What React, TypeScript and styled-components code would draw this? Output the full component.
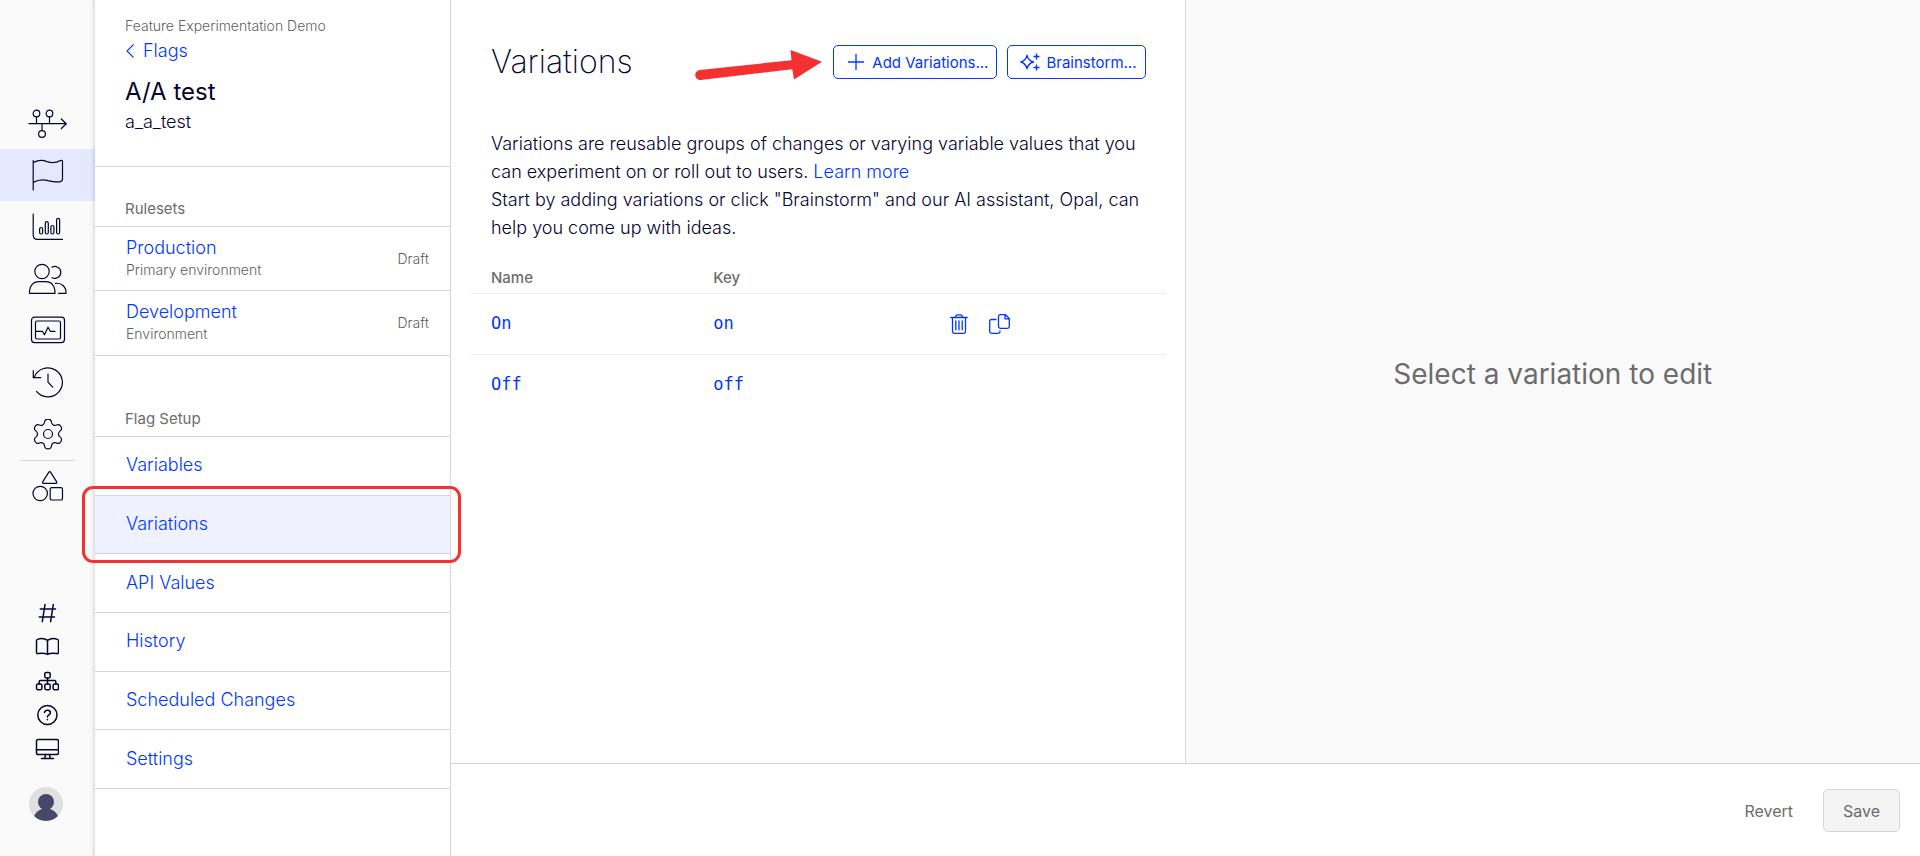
import React from 'react';
import styled, { createGlobalStyle } from 'styled-components';
import { Settings } from 'lucide-react';

const color = {
  ink: '#04042e',
  blue: '#0037ff',
  grey: '#6c6c6c',
  note: '#5f5f5f',
  line: '#d6d6d6',
  faint: '#ededed',
  pale: '#fafafa',
  red: '#f43030',
};

const GlobalStyle = createGlobalStyle`
  *, *::before, *::after { box-sizing: border-box; }
  body {
    margin: 0;
    background: #fff;
    color: ${color.ink};
    font-family: Inter, "Liberation Sans", sans-serif;
    font-size: 18px;
    font-weight: 300;
  }
  a { color: ${color.blue}; text-decoration: none; }
  button { font-family: inherit; cursor: pointer; }
  svg { display: block; }
`;

const Shell = styled.div`
  display: flex;
  min-height: 100vh;
`;

const Rail = styled.nav`
  display: flex;
  flex-direction: column;
  flex: 0 0 95px;
  padding: 97px 0 35px;
  background: ${color.pale};
  box-shadow: inset -4px 0 4px -3px rgba(0, 0, 0, 0.16);
`;

const RailLink = styled.a<{ $active?: boolean }>`
  display: flex;
  align-items: center;
  justify-content: center;
  height: 52px;
  padding-right: 2px;
  background: ${(p) => (p.$active ? '#e5e9ff' : 'transparent')};
  box-shadow: ${(p) => (p.$active ? 'inset -4px 0 4px -3px rgba(0, 0, 0, 0.16)' : 'none')};
`;

const RailDivider = styled.hr`
  width: 55px;
  height: 1px;
  margin: -1px 0 -1px 20px;
  border: 0;
  background: ${color.line};
`;

const RailTools = styled.div`
  display: flex;
  flex-direction: column;
  margin-top: auto;
`;

const ToolLink = styled.a`
  display: flex;
  align-items: center;
  justify-content: center;
  height: 34px;
  padding-right: 2px;
`;

const Avatar = styled.button`
  width: 34px;
  height: 34px;
  margin: 21px 0 0 29px;
  padding: 0;
  border: 0;
  border-radius: 50%;
  background: #e0e0e0;
  overflow: hidden;
`;

const Side = styled.aside`
  flex: 0 0 356px;
  border-right: 1px solid ${color.line};
`;

const SideHeader = styled.header`
  padding: 16px 30px 31px;
  border-bottom: 1px solid ${color.line};
`;

const BackLink = styled.a`
  display: flex;
  align-items: center;
  gap: 8px;
  height: 30px;
  line-height: 24px;
`;

const FlagName = styled.h1`
  margin: 10px 0 0;
  font-size: 24px;
  line-height: 32px;
  font-weight: 400;
`;

const FlagKey = styled.div`
  line-height: 27px;
`;

const SectionLabel = styled.h2<{ $spacious?: boolean }>`
  margin: 0;
  padding: ${(p) => (p.$spacious ? 53 : 32)}px 30px 7px;
  border-bottom: 1px solid ${color.line};
  font-size: 15px;
  line-height: 20px;
  font-weight: 400;
  color: ${color.grey};
`;

const Ruleset = styled.a`
  display: flex;
  align-items: center;
  justify-content: space-between;
  height: 64px;
  padding: 0 21px 0 31px;
  border-bottom: 1px solid ${color.line};
  & + & { height: 65px; }
`;

const RulesetText = styled.div`
  padding-bottom: 2px;
  line-height: 24px;
`;

const Note = styled.div`
  font-size: 14px;
  line-height: 20px;
  color: ${color.note};
`;

const SetupList = styled.ul`
  display: grid;
  grid-auto-rows: 1fr;
  min-height: 352px;
  margin: 0;
  padding: 0;
  list-style: none;
`;

const SetupItem = styled.li<{ $active?: boolean }>`
  position: relative;
  display: flex;
  border-bottom: 1px solid ${color.line};
  background: ${(p) => (p.$active ? '#eff1ff' : 'transparent')};
  a {
    flex: 1;
    display: flex;
    align-items: center;
    padding: 0 0 2px 31px;
  }
`;

const Highlight = styled.span`
  position: absolute;
  inset: -10px -11px -10px -13px;
  z-index: 1;
  border: 3px solid ${color.red};
  border-radius: 11px;
  pointer-events: none;
`;

const Work = styled.div`
  flex: 1;
  display: flex;
  flex-direction: column;
  min-width: 0;
`;

const Panes = styled.div`
  flex: 1;
  display: grid;
  grid-template-columns: 1fr 1fr;
`;

const Main = styled.main`
  border-right: 1px solid ${color.line};
`;

const MainHeader = styled.header`
  display: flex;
  align-items: center;
  gap: 10px;
  padding: 40px 39px 0 40px;
`;

const Title = styled.h2`
  margin: 0 auto 0 0;
  font-size: 32px;
  line-height: 44px;
  font-weight: 200;
`;

const OutlineButton = styled.button`
  display: flex;
  align-items: center;
  gap: 6px;
  height: 34px;
  padding: 0 8px 0 12px;
  border: 1px solid ${color.blue};
  border-radius: 5px;
  background: #fff;
  color: ${color.blue};
  font-size: 15px;
  white-space: nowrap;
`;

const Intro = styled.p`
  margin: 46px 39px 0 40px;
  line-height: 28px;
`;

const Table = styled.table`
  width: calc(100% - 39px);
  margin: 20px 19px 0 20px;
  border-collapse: collapse;
  table-layout: fixed;
  th {
    height: 31px;
    padding: 0 0 0 20px;
    text-align: left;
    font-size: 15px;
    font-weight: 500;
    color: ${color.grey};
  }
  td {
    height: 61px;
    padding: 0 0 2px 20px;
    font-family: "DejaVu Sans Mono", monospace;
    font-size: 17px;
  }
  tbody tr { border-top: 1px solid ${color.faint}; }
`;

const Col = styled.col<{ $width: string }>`
  width: ${(p) => p.$width};
`;

const Actions = styled.div`
  display: flex;
  gap: 21px;
  padding: 2px 0 0 1px;
`;

const IconButton = styled.button`
  padding: 0;
  border: 0;
  background: none;
  color: ${color.blue};
`;

const Editor = styled.section`
  display: flex;
  align-items: center;
  justify-content: center;
  padding-bottom: 16px;
  background: ${color.pale};
  color: ${color.grey};
  font-size: 28px;
  font-weight: 400;
`;

const Footer = styled.footer`
  display: flex;
  align-items: center;
  justify-content: flex-end;
  gap: 10px;
  height: 93px;
  padding-right: 20px;
  border-top: 1px solid ${color.line};
`;

const FooterButton = styled.button<{ $filled?: boolean }>`
  height: 43px;
  padding: 2px 19px 0;
  border: 1px solid ${(p) => (p.$filled ? color.line : 'transparent')};
  border-radius: 5px;
  background: ${(p) => (p.$filled ? '#f4f4f4' : 'transparent')};
  color: ${color.grey};
  font-size: 16px;
`;

const RailIcon = ({ children }: { children: React.ReactNode }) => (
  <svg width="40" height="32" viewBox="0 0 40 32" fill="none" stroke={color.ink} strokeWidth="1.2" strokeLinecap="round" strokeLinejoin="round" aria-hidden="true">
    {children}
  </svg>
);

const ToolIcon = ({ children }: { children: React.ReactNode }) => (
  <svg width="24" height="24" viewBox="0 0 24 24" fill="none" stroke={color.ink} strokeWidth="1.5" strokeLinecap="round" strokeLinejoin="round" aria-hidden="true">
    {children}
  </svg>
);

const railItems = [
  {
    label: 'Overview',
    icon: (
      <RailIcon>
        <circle cx="9.5" cy="6.5" r="3.3" />
        <circle cx="22.5" cy="6.5" r="3.3" />
        <circle cx="15" cy="27" r="3.4" />
        <path d="M2 16.7H39M9.5 10V16.7M22.5 10V16.7M15 16.7V23.5M34.3 12L39.3 16.7L34.3 21.5" />
      </RailIcon>
    ),
  },
  {
    label: 'Flags',
    active: true,
    icon: (
      <RailIcon>
        <path d="M6.2 1.5V31M6.2 3.6C10 1.6 16 1 20 2.6C25 4.4 30 3.6 33.5 1.6C34.8 1 35.5 1.4 35.5 2.6V20C35.5 22 34.5 22.6 32.5 22.8C28 23.3 25 22.6 21 21.6C16 20.2 11 20.8 6.2 23.4" />
      </RailIcon>
    ),
  },
  {
    label: 'Reports',
    icon: (
      <RailIcon>
        <path d="M6.2 3V24C6.2 27 7.5 28.4 10.5 28.4H35.5" />
        <rect x="12.6" y="16.5" width="3" height="6.5" rx="1.5" />
        <rect x="18.3" y="10.7" width="3" height="12.3" rx="1.5" />
        <rect x="23.9" y="14.5" width="3" height="8.5" rx="1.5" />
        <rect x="29.6" y="7.3" width="3" height="15.7" rx="1.5" />
      </RailIcon>
    ),
  },
  {
    label: 'Audiences',
    icon: (
      <RailIcon>
        <circle cx="15" cy="8.5" r="7.2" />
        <path d="M25 4.3C28.5 2.2 33.8 4.5 33.8 9.3C33.8 14.2 28.7 16.7 25 14.7" />
        <path d="M2.5 30.3C2.2 23 6 18.7 12 18.7H18.5C24.5 18.7 28.3 23 28 30.3Z" />
        <path d="M28.5 20.3C35 19.7 39.3 24 39 30.3H31.5" />
      </RailIcon>
    ),
  },
  {
    label: 'Monitoring',
    icon: (
      <RailIcon>
        <rect x="4.5" y="2.2" width="33" height="25.4" rx="3" />
        <rect x="8.5" y="6" width="25" height="18" rx="1.5" />
        <path d="M8.5 16.3H15.3L17.5 19.8L21 12.2L23.3 16.3H28" />
      </RailIcon>
    ),
  },
  {
    label: 'History',
    icon: (
      <RailIcon>
        <path d="M7.2 10.5A14.5 14.5 0 1 1 9.5 24.4M6.3 3.5V10.7H13.7M21 7.2V15.2L25.7 20.2" />
      </RailIcon>
    ),
  },
  {
    label: 'Settings',
    icon: (
      <RailIcon>
        <Settings x={3} y={-3} size={36} strokeWidth={0.8} color={color.ink} />
      </RailIcon>
    ),
  },
];

const toolItems = [
  {
    label: 'Channels',
    icon: <ToolIcon><path d="M5.3 8H20.5M4.3 16H19.5M10 3.5L7.3 20.7M18.3 3.5L15.6 20.7" /></ToolIcon>,
  },
  {
    label: 'Documentation',
    icon: <ToolIcon><path d="M12.5 5.3C9.5 3.5 5 3.5 2.6 4.4C1.8 4.7 1.5 5.2 1.5 6V17.3C1.5 18.3 2.2 18.8 3.2 18.6C6.5 17.9 9.5 18 12.5 19.3C15.5 18 18.5 17.9 21.8 18.6C22.8 18.8 23.5 18.3 23.5 17.3V6C23.5 5.2 23.2 4.7 22.4 4.4C20 3.5 15.5 3.5 12.5 5.3ZM12.5 5.3V19.5" /></ToolIcon>,
  },
  {
    label: 'Structure',
    icon: (
      <ToolIcon>
        <rect x="9.8" y="3.6" width="5.4" height="5.4" rx="1.4" />
        <rect x="1.5" y="15.1" width="5.4" height="5.6" rx="1.4" />
        <rect x="9.8" y="15.1" width="5.4" height="5.6" rx="1.4" />
        <rect x="18.1" y="15.1" width="5.4" height="5.6" rx="1.4" />
        <path d="M12.5 9V15M4.2 15V12.4Q4.2 11.5 5.2 11.5H19.8Q20.8 11.5 20.8 12.4V15" />
      </ToolIcon>
    ),
  },
  {
    label: 'Help',
    icon: (
      <ToolIcon>
        <circle cx="12.4" cy="12" r="9.6" />
        <path d="M9.5 9.6C9.5 6.4 15.4 6.5 15.4 9.7C15.4 11.9 12.4 11.9 12.4 13.9M12.4 16.6V16.7" />
      </ToolIcon>
    ),
  },
  {
    label: 'Display',
    icon: (
      <ToolIcon>
        <rect x="1.5" y="2.5" width="22" height="15" rx="1.8" />
        <path d="M1.5 12.8H23.5M10.5 17.5L9.8 21.3M14.5 17.5L15.2 21.3M6.5 21.4H18.5" />
      </ToolIcon>
    ),
  },
];

const rulesets = [
  { name: 'Production', note: 'Primary environment', status: 'Draft' },
  { name: 'Development', note: 'Environment', status: 'Draft' },
];

const setupPages = ['Variables', 'Variations', 'API Values', 'History', 'Scheduled Changes', 'Settings'];

const variations = [
  { name: 'On', key: 'on', editable: true },
  { name: 'Off', key: 'off', editable: false },
];

const Arrow = () => (
  <svg width="128" height="40" viewBox="0 -7 128 40" fill={color.red} aria-hidden="true">
    <path d="M5 21L96.5 11.2L95.5 1L127 12.7L99 30.5L97.3 20.3L5.5 31A5 5 0 0 1 5 21Z" />
  </svg>
);

const PlusIcon = () => (
  <svg width="20" height="18" viewBox="-1 0 20 18" fill="none" stroke="currentColor" strokeWidth="1.3" aria-hidden="true">
    <path d="M9 1V17M1 9H17" />
  </svg>
);

const SparkleIcon = () => (
  <svg width="20" height="18" viewBox="0 0 20 18" fill="none" stroke="currentColor" strokeWidth="1.4" strokeLinejoin="round" aria-hidden="true">
    <path d="M7 2.3C8 6.3 9.5 8 13.5 9C9.5 10 8 11.7 7 15.7C6 11.7 4.5 10 0.8 9C4.5 8 6 6.3 7 2.3Z" />
    <path d="M16.5 0.5V6.5M13.5 3.5H19.5M16.5 11.5V17.5M13.5 14.5H19.5" />
  </svg>
);

const TrashIcon = () => (
  <svg width="18" height="20" viewBox="0 0 18 20" fill="none" stroke="currentColor" strokeWidth="1.3" strokeLinecap="round" strokeLinejoin="round" aria-hidden="true">
    <path d="M0.8 3.5H17.2M2.5 3.5V17.5Q2.5 19.3 4.3 19.3H13.7Q15.5 19.3 15.5 17.5V3.5M5.5 3.3Q5.8 0.8 7.3 0.8H10.7Q12.2 0.8 12.5 3.3M5.8 6.8V15.8M9 6.8V15.8M12.2 6.8V15.8" />
  </svg>
);

const CopyIcon = () => (
  <svg width="21" height="20" viewBox="0 0 21 20" fill="none" stroke="currentColor" strokeWidth="1.3" strokeLinecap="round" strokeLinejoin="round" aria-hidden="true">
    <path d="M11.3 0.7H16.5L20.3 4.5V12.5Q20.3 14.3 18.5 14.3H11.3Q9.5 14.3 9.5 12.5V2.5Q9.5 0.7 11.3 0.7ZM16 1V4.8H20M7 5.5H2.5Q0.7 5.5 0.7 7.3V17.5Q0.7 19.3 2.5 19.3H9.2Q11 19.3 11 17.5V16.8" />
  </svg>
);

export default function App() {
  return (
    <>
      <GlobalStyle />
      <Shell>
        <Rail aria-label="Product">
          {railItems.map((item) => (
            <RailLink key={item.label} href="#" aria-label={item.label} $active={item.active}>
              {item.icon}
            </RailLink>
          ))}
          <RailDivider />
          <RailLink href="#" aria-label="Components">
            <RailIcon>
              <path d="M21.7 2.4Q22.7 0.9 23.7 2.4L29.7 11.9Q30.3 13.3 28.9 13.3H16.5Q15.1 13.3 15.7 11.9Z" />
              <circle cx="13.2" cy="23.5" r="7.2" />
              <rect x="23.2" y="17.7" width="12.3" height="12.3" rx="1.6" />
            </RailIcon>
          </RailLink>
          <RailTools>
            {toolItems.map((item) => (
              <ToolLink key={item.label} href="#" aria-label={item.label}>
                {item.icon}
              </ToolLink>
            ))}
            <Avatar type="button" aria-label="Account">
              <svg width="34" height="34" viewBox="0 0 34 34" fill="#464769" aria-hidden="true">
                <circle cx="17" cy="15" r="8" />
                <path d="M5 29.5C7 24 12 21.5 17 21.5S27 24 29 29.5C24 35.5 10 35.5 5 29.5Z" />
              </svg>
            </Avatar>
          </RailTools>
        </Rail>

        <Side>
          <SideHeader>
            <Note>Feature Experimentation Demo</Note>
            <BackLink href="#">
              <svg width="10" height="14" viewBox="0 0 10 14" fill="none" stroke="currentColor" strokeWidth="1.1" aria-hidden="true">
                <path d="M8.5 0.5L2 7L8.5 13.5" />
              </svg>
              Flags
            </BackLink>
            <FlagName>A/A test</FlagName>
            <FlagKey>a_a_test</FlagKey>
          </SideHeader>

          <SectionLabel>Rulesets</SectionLabel>
          {rulesets.map((r) => (
            <Ruleset key={r.name} href="#">
              <RulesetText>
                {r.name}
                <Note>{r.note}</Note>
              </RulesetText>
              <Note>{r.status}</Note>
            </Ruleset>
          ))}

          <SectionLabel $spacious>Flag Setup</SectionLabel>
          <SetupList>
            {setupPages.map((page) => (
              <SetupItem key={page} $active={page === 'Variations'}>
                <a href="#">{page}</a>
                {page === 'Variations' && <Highlight />}
              </SetupItem>
            ))}
          </SetupList>
        </Side>

        <Work>
          <Panes>
            <Main>
              <MainHeader>
                <Title>Variations</Title>
                <Arrow />
                <OutlineButton type="button">
                  <PlusIcon />
                  Add Variations...
                </OutlineButton>
                <OutlineButton type="button">
                  <SparkleIcon />
                  Brainstorm...
                </OutlineButton>
              </MainHeader>
              <Intro>
                Variations are reusable groups of changes or varying variable values that you can experiment on or roll out to
                users. <a href="#">Learn more</a>
                <br />
                Start by adding variations or click "Brainstorm" and our AI assistant, Opal, can help you come up with ideas.
              </Intro>
              <Table>
                <colgroup>
                  <Col $width="32%" />
                  <Col $width="34%" />
                  <Col $width="34%" />
                </colgroup>
                <thead>
                  <tr>
                    <th scope="col">Name</th>
                    <th scope="col">Key</th>
                    <th aria-label="Actions" />
                  </tr>
                </thead>
                <tbody>
                  {variations.map((v) => (
                    <tr key={v.key}>
                      <td>
                        <a href="#">{v.name}</a>
                      </td>
                      <td>
                        <a href="#">{v.key}</a>
                      </td>
                      <td>
                        {v.editable && (
                          <Actions>
                            <IconButton type="button" aria-label="Delete variation">
                              <TrashIcon />
                            </IconButton>
                            <IconButton type="button" aria-label="Duplicate variation">
                              <CopyIcon />
                            </IconButton>
                          </Actions>
                        )}
                      </td>
                    </tr>
                  ))}
                </tbody>
              </Table>
            </Main>
            <Editor>Select a variation to edit</Editor>
          </Panes>
          <Footer>
            <FooterButton type="button">Revert</FooterButton>
            <FooterButton type="button" $filled>
              Save
            </FooterButton>
          </Footer>
        </Work>
      </Shell>
    </>
  );
}
